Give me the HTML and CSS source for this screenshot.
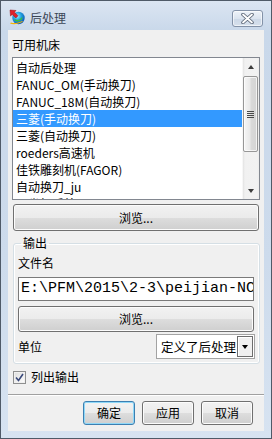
FILE: index.html
```html
<!DOCTYPE html>
<html lang="zh-CN">
<head>
<meta charset="utf-8">
<title>后处理</title>
<link rel="stylesheet" href="styles.css">
</head>
<body>
<div class="window">
  <div class="titlebar">
    <svg class="app-icon" width="16" height="16" viewBox="0 0 16 16">
      <defs>
        <radialGradient id="globe" cx="0.4" cy="0.35" r="0.7">
          <stop offset="0" stop-color="#9ff0ff"/>
          <stop offset="0.45" stop-color="#23a3e0"/>
          <stop offset="1" stop-color="#0a4fb0"/>
        </radialGradient>
      </defs>
      <circle cx="9.5" cy="9" r="6.2" fill="url(#globe)"/>
      <path d="M6 10 C8 12 11 11 13 8 L13.5 9 C12 12.5 8 13.5 5.5 11.5 Z" fill="#3fbf3a"/>
      <path d="M1 14.5 C4 15.8 9 15.5 14 12.5 L13 12 C9 14.2 5 14.6 2 13.6 Z" fill="#f5b400"/>
      <path d="M1 1 L7 1.5 L5.4 3.2 L9 6.8 L6.8 9 L3.2 5.4 L1.5 7 Z" fill="#e0202a" stroke="#8c0c12" stroke-width="0.5"/>
    </svg>
    <span class="title">后处理</span>
    <div class="close-btn">
      <svg width="13" height="11" viewBox="0 0 13 11">
        <path d="M2 1.5 L11 9.5 M11 1.5 L2 9.5" stroke="#5b6676" stroke-width="3.6" stroke-linecap="round"/>
        <path d="M2 1.5 L11 9.5 M11 1.5 L2 9.5" stroke="#ffffff" stroke-width="1.8" stroke-linecap="round"/>
      </svg>
    </div>
  </div>
  <div class="client">
    <div class="label machines-label">可用机床</div>
    <div class="listbox">
      <ul class="items">
        <li>自动后处理</li>
        <li>FANUC_OM(手动换刀)</li>
        <li>FANUC_18M(自动换刀)</li>
        <li class="selected">三菱(手动换刀)</li>
        <li>三菱(自动换刀)</li>
        <li>roeders高速机</li>
        <li>佳铁雕刻机(FAGOR)</li>
        <li>自动换刀_ju</li>
        <li>三坐标后处理</li>
      </ul>
      <div class="vscroll">
        <div class="arrow up"></div>
        <div class="track">
          <div class="thumb"><div class="grip"></div></div>
        </div>
        <div class="arrow down"></div>
      </div>
    </div>
    <div class="button browse-top">浏览...</div>
    <fieldset class="group">
      <legend>输出</legend>
      <div class="label file-label">文件名</div>
      <div class="textfield">E:\PFM\2015\2-3\peijian-NC.txt</div>
      <div class="button browse-inner">浏览...</div>
      <div class="unit-row">
        <span class="label">单位</span>
        <div class="combo">
          <span class="combo-text">定义了后处理</span>
          <span class="combo-btn"><span class="tri-down"></span></span>
        </div>
      </div>
    </fieldset>
    <div class="check-row">
      <span class="checkbox">
        <svg width="9" height="9" viewBox="0 0 9 9"><path d="M1 4.5 L3.5 7.5 L8 1" fill="none" stroke="#39497a" stroke-width="1.6"/></svg>
      </span>
      <span class="label">列出输出</span>
    </div>
    <div class="separator"></div>
    <div class="actions">
      <div class="button action default">确定</div>
      <div class="button action">应用</div>
      <div class="button action">取消</div>
    </div>
  </div>
</div>
</body>
</html>
```

FILE: styles.css
```css
* { box-sizing: border-box; }
html, body { margin: 0; padding: 0; }
body {
  font-family: "Noto Sans CJK SC", "Noto Sans", sans-serif;
  font-size: 12px;
  color: #000;
  background: #ffffff;
}
.window {
  width: 272px;
  height: 439px;
  border: 1px solid #4f5a68;
  background: linear-gradient(#dbe5f2, #c9d8ea 30px, #cddbec 60%, #d7e3f1);
  padding: 0 7px 7px 7px;
  display: flex;
  flex-direction: column;
}
.titlebar {
  height: 29px;
  display: flex;
  align-items: flex-start;
  position: relative;
}
.app-icon {
  margin-top: 8px;
  margin-left: 1px;
}
.title {
  margin-left: 5px;
  margin-top: 9px;
  line-height: 16px;
  color: #3a4556;
}
.close-btn {
  margin-left: auto;
  margin-top: 9px;
  margin-right: 1px;
  width: 31px;
  height: 17px;
  border: 1px solid #8392a8;
  border-radius: 3px;
  background: linear-gradient(#eef3f9, #dbe4ef 50%, #ccd8e7 51%, #d6e0ec);
  box-shadow: inset 0 0 0 1px rgba(255,255,255,0.6);
  display: flex;
  align-items: center;
  justify-content: center;
}
.client {
  height: 401px;
  background: #f0f0f0;
  display: flex;
  flex-direction: column;
  padding-top: 7px;
}
.label { line-height: 16px; white-space: nowrap; }
.machines-label { margin-left: 4px; height: 16px; }
.listbox {
  margin: 4px 0 0 4px;
  width: 248px;
  height: 143px;
  border: 1px solid #828790;
  background: #fff;
  display: flex;
  overflow: hidden;
}
.items {
  list-style: none;
  margin: 0;
  padding: 1px 0 0 0;
  flex: 1;
  overflow: hidden;
}
.items li {
  height: 17px;
  line-height: 17px;
  padding-left: 3px;
  white-space: nowrap;
}
.items li.selected {
  background: #3399ff;
  color: #fff;
}
.vscroll {
  width: 17px;
  display: flex;
  flex-direction: column;
  background: linear-gradient(to right, #e3e3e3, #f1f1f1 2px, #f2f2f2 14px, #ececec);
  border-left: 1px solid #f7f7f7;
}
.arrow {
  height: 17px;
  display: flex;
  align-items: center;
  justify-content: center;
}
.arrow.up::before {
  content: "";
  border-left: 3.5px solid transparent;
  border-right: 3.5px solid transparent;
  border-bottom: 4px solid #3c3c3c;
}
.arrow.down::before {
  content: "";
  border-left: 3.5px solid transparent;
  border-right: 3.5px solid transparent;
  border-top: 4px solid #3c3c3c;
}
.track {
  flex: 1;
  padding: 1px 1px 0 0;
}
.thumb {
  height: 76px;
  border: 1px solid #979797;
  border-radius: 2px;
  background: linear-gradient(to right, #f6f6f6, #e9e9e9 45%, #d9d9d9 55%, #d4d4d4);
  box-shadow: inset 0 0 0 1px rgba(255,255,255,0.7);
  display: flex;
  align-items: center;
  justify-content: center;
}
.grip {
  width: 7px;
  height: 7px;
  background: repeating-linear-gradient(#4a4a4a 0 1px, transparent 1px 2px);
}
.button {
  border: 1px solid #707070;
  border-radius: 3px;
  background: linear-gradient(#f2f2f2, #ebebeb 50%, #dddddd 51%, #cfcfcf);
  box-shadow: inset 0 0 0 1px #fcfcfc;
  display: flex;
  align-items: center;
  justify-content: center;
  line-height: 16px;
}
.browse-top {
  margin: 4px 0 0 5px;
  width: 246px;
  height: 27px;
}
.group {
  margin: 4px 0 0 5px;
  width: 247px;
  border: 1px solid #d5dfe5;
  border-radius: 3px;
  box-shadow: inset 0 0 0 1px #ffffff;
  padding: 4px 5px 4px 4px;
  min-width: 0;
}
.group legend {
  margin-left: 3px;
  padding: 0 2px;
  line-height: 16px;
}
.file-label { height: 16px; }
.textfield {
  margin-top: 6px;
  width: 236px;
  height: 24px;
  border: 1px solid #7a7a7a;
  background: #fff;
  font-family: "Liberation Mono", monospace;
  font-size: 15px;
  line-height: 22px;
  padding-left: 2px;
  white-space: nowrap;
  overflow: hidden;
}
.browse-inner {
  margin-top: 5px;
  width: 236px;
  height: 26px;
}
.unit-row {
  margin-top: 2px;
  width: 237px;
  display: flex;
  align-items: center;
  justify-content: space-between;
}
.combo {
  width: 99px;
  height: 25px;
  border: 1px solid #a3a3a3;
  background: #fff;
  display: flex;
  align-items: stretch;
  padding: 1px;
}
.combo-text {
  flex: 1;
  padding-left: 3px;
  line-height: 21px;
  font-size: 12.5px;
}
.combo-btn {
  width: 16px;
  border: 1px solid #6d6d6d;
  background: #f0f0f0;
  box-shadow: inset 1px 1px 0 #fff;
  display: flex;
  align-items: center;
  justify-content: center;
}
.tri-down {
  border-left: 3.5px solid transparent;
  border-right: 3.5px solid transparent;
  border-top: 4px solid #000;
}
.check-row {
  margin: 5px 0 0 5px;
  height: 16px;
  display: flex;
  align-items: center;
  gap: 5px;
}
.checkbox {
  width: 13px;
  height: 13px;
  border: 1px solid #8e8f8f;
  background: linear-gradient(135deg, #dcdcdc, #f4f4f4 70%, #ffffff);
  box-shadow: inset 0 0 0 1px #f0f0f0;
  display: flex;
  align-items: center;
  justify-content: center;
}
.separator {
  margin-top: 9px;
  height: 2px;
  border-top: 1px solid #a0a0a0;
  border-bottom: 1px solid #ffffff;
}
.actions {
  margin-top: 5px;
  padding-right: 11px;
  display: flex;
  justify-content: flex-end;
  gap: 7px;
}
.action {
  width: 52px;
  height: 24px;
}
.action.default {
  border-color: #3c7fb1;
  box-shadow: inset 0 0 0 1px #8fd8f8;
}
```
